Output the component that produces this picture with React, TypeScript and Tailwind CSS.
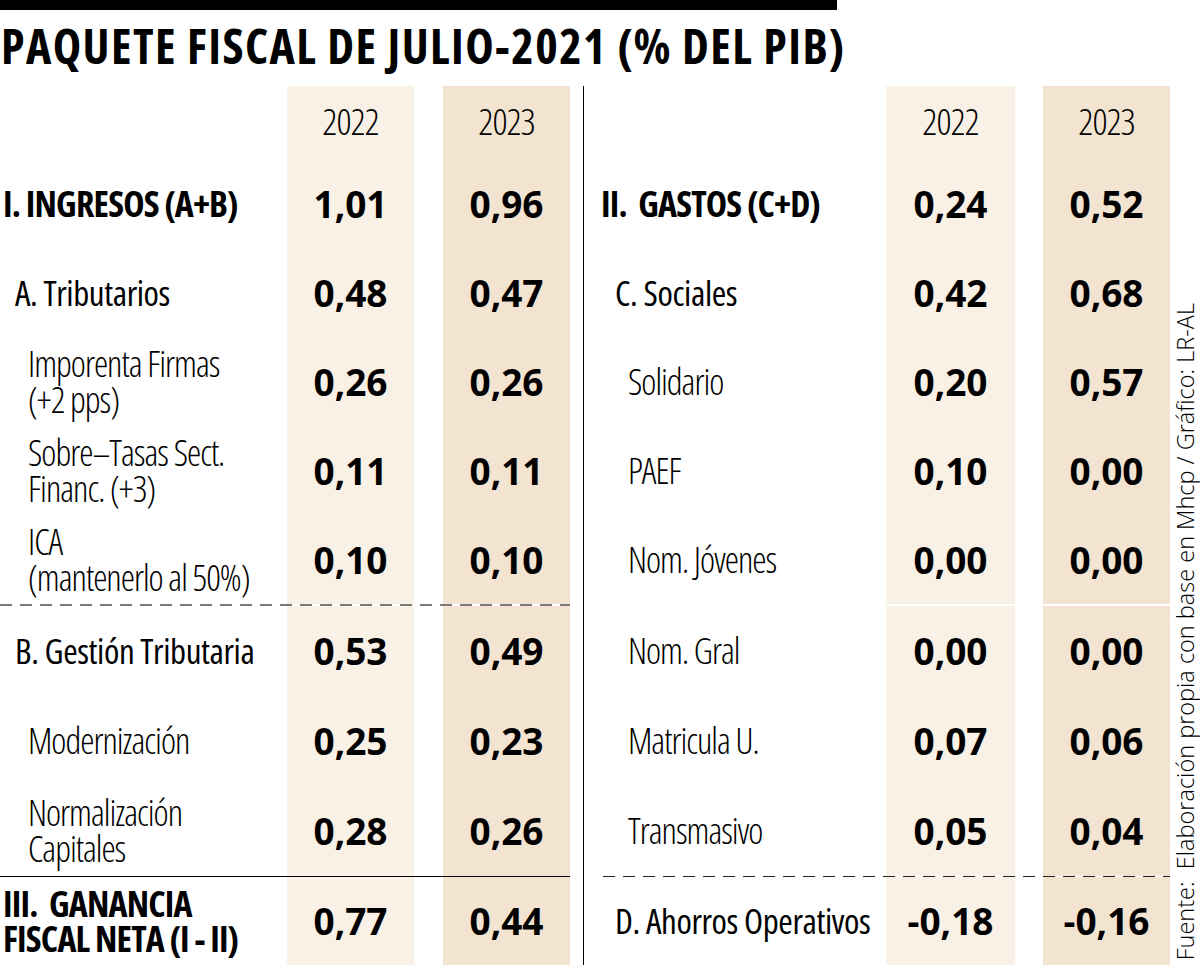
type Kind = 'main' | 'sub' | 'item';

interface Row {
  label: string[];
  kind: Kind;
  a: string;
  b: string;
}

const ingresos: Row[] = [
  { label: ['I. INGRESOS (A+B)'], kind: 'main', a: '1,01', b: '0,96' },
  { label: ['A. Tributarios'], kind: 'sub', a: '0,48', b: '0,47' },
  { label: ['Imporenta Firmas', '(+2 pps)'], kind: 'item', a: '0,26', b: '0,26' },
  { label: ['Sobre–Tasas Sect.', 'Financ. (+3)'], kind: 'item', a: '0,11', b: '0,11' },
  { label: ['ICA', '(mantenerlo al 50%)'], kind: 'item', a: '0,10', b: '0,10' },
  { label: ['B. Gestión Tributaria'], kind: 'sub', a: '0,53', b: '0,49' },
  { label: ['Modernización'], kind: 'item', a: '0,25', b: '0,23' },
  { label: ['Normalización', 'Capitales'], kind: 'item', a: '0,28', b: '0,26' },
  { label: ['III.  GANANCIA', 'FISCAL NETA (I - II)'], kind: 'main', a: '0,77', b: '0,44' },
];

const gastos: Row[] = [
  { label: ['II.  GASTOS (C+D)'], kind: 'main', a: '0,24', b: '0,52' },
  { label: ['C. Sociales'], kind: 'sub', a: '0,42', b: '0,68' },
  { label: ['Solidario'], kind: 'item', a: '0,20', b: '0,57' },
  { label: ['PAEF'], kind: 'item', a: '0,10', b: '0,00' },
  { label: ['Nom. Jóvenes'], kind: 'item', a: '0,00', b: '0,00' },
  { label: ['Nom. Gral'], kind: 'item', a: '0,00', b: '0,00' },
  { label: ['Matricula U.'], kind: 'item', a: '0,07', b: '0,06' },
  { label: ['Transmasivo'], kind: 'item', a: '0,05', b: '0,04' },
  { label: ['D. Ahorros Operativos'], kind: 'sub', a: '-0,18', b: '-0,16' },
];

// row heights line up both halves; separators sit after row 5 and row 8
const rowHeights = ['h-[89px]', 'h-[89px]', 'h-[89px]', 'h-[89px]', 'h-[89px]', 'h-[90px]', 'h-[90px]', 'h-[90px]', 'h-[88px]'];

const kindText: Record<Kind, string> = {
  main: 'text-[36px] leading-[35px] font-bold tracking-[-0.8px]',
  sub: 'text-[35px] leading-[36px] font-normal tracking-[-0.4px]',
  item: 'text-[36px] leading-[36px] font-light tracking-[-1px]',
};

function Label({ row, indent }: { row: Row; indent: Record<Kind, string> }) {
  return (
    <div className={`flex flex-col justify-center font-stretch-condensed whitespace-pre ${indent[row.kind]} ${kindText[row.kind]}`}>
      {row.label.map(l => (
        <span key={l}>{l}</span>
      ))}
    </div>
  );
}

function Table({
  rows,
  cols,
  indent,
  midSep,
  lowSep,
}: {
  rows: Row[];
  cols: string;
  indent: Record<Kind, string>;
  midSep: string;
  lowSep: string;
}) {
  return (
    <div className="flex flex-col">
      <div className={`grid ${cols} h-[73px]`}>
        <div />
        <div className="flex items-center justify-center bg-[#f9f1e5] pb-[3px] text-[37px] font-light font-stretch-condensed tracking-[-1px]">2022</div>
        <div />
        <div className="flex items-center justify-center bg-[#f3e4d1] pb-[3px] text-[37px] font-light font-stretch-condensed tracking-[-1px]">2023</div>
      </div>
      {rows.map((row, i) => (
        <div key={row.label[0]}>
          {i === 5 && <div className={midSep} />}
          {i === 8 && <div className={lowSep} />}
          <div className={`grid ${cols} ${rowHeights[i]}`}>
            <Label row={row} indent={indent} />
            <div className="flex items-center justify-center bg-[#f9f1e5] text-[37px] font-bold">{row.a}</div>
            <div />
            <div className="flex items-center justify-center bg-[#f3e4d1] text-[37px] font-bold">{row.b}</div>
          </div>
        </div>
      ))}
    </div>
  );
}

export default function App() {
  return (
    <div className="w-[1200px] h-[965px] overflow-hidden bg-white text-black font-['Open_Sans',sans-serif]">
      <div className="h-[10px] w-[837px] bg-black" />
      <h1 className="mt-[13px] pl-[1px] text-[48px] leading-[46px] font-bold font-stretch-condensed tracking-[1.45px] whitespace-nowrap">
        PAQUETE FISCAL DE JULIO-2021 (% DEL PIB)
      </h1>
      <div className="mt-[17px] flex h-[879px]">
        <div className="w-[570px]">
          <Table
            rows={ingresos}
            cols="grid-cols-[287px_127px_29px_127px]"
            indent={{ main: 'pl-[3px]', sub: 'pl-[15px]', item: 'pl-[28px]' }}
            midSep="h-[2px] bg-[repeating-linear-gradient(90deg,#7a7a7a_0_12px,transparent_12px_20px)]"
            lowSep="h-px bg-black"
          />
        </div>
        <div className="ml-[13px] w-px bg-black" />
        <div className="w-[586px]">
          <Table
            rows={gastos}
            cols="grid-cols-[302px_129px_28px_127px]"
            indent={{ main: 'pl-[17px]', sub: 'pl-[31px]', item: 'pl-[44px]' }}
            midSep="h-[2px]"
            lowSep="ml-[19px] h-px bg-[repeating-linear-gradient(90deg,#222_0_12px,transparent_12px_20px)]"
          />
        </div>
        <div className="flex w-[30px] items-end justify-center pb-[5px]">
          <p className="rotate-180 whitespace-pre text-[23.5px] leading-[28px] font-light [writing-mode:vertical-rl]">
            Fuente:  Elaboración propia con base en Mhcp / Gráfico: LR-AL
          </p>
        </div>
      </div>
    </div>
  );
}
